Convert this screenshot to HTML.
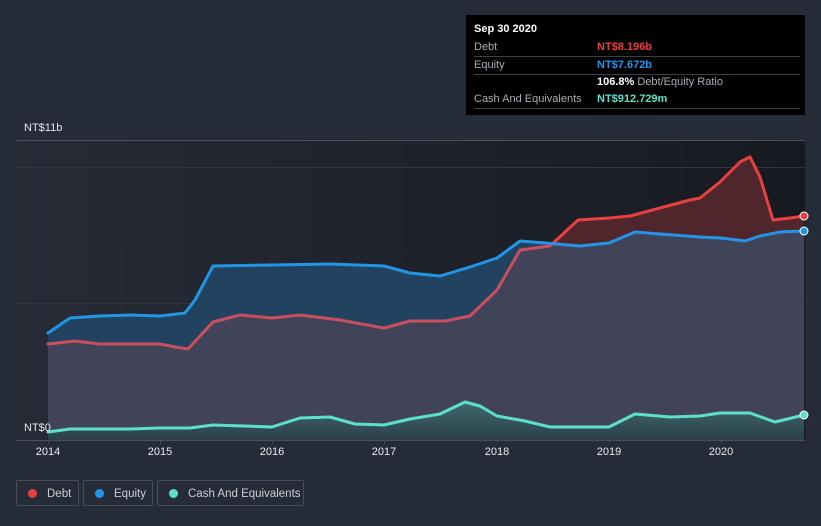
<!DOCTYPE html>
<html><head><meta charset="utf-8"><style>
html,body{margin:0;width:821px;height:526px;overflow:hidden}
body{background:#262c37;font-family:"Liberation Sans",sans-serif;position:relative}
.tip{position:absolute;left:466px;top:15px;width:339px;height:100px;background:#000;color:#fff;font-size:11px}
.row{position:absolute;left:8px;width:326px;border-bottom:1px solid #3c3f45;height:17px;line-height:17px}
.lbl{color:#a8acb3}
.v{position:absolute;left:123px;font-weight:bold}
.leg{position:absolute;top:480px;height:26px;border:1px solid #474d58;border-radius:2px;color:#c9ccd2;font-size:11.5px;line-height:26px;box-sizing:border-box;white-space:nowrap;overflow:hidden}
.dot{display:inline-block;width:9px;height:9px;border-radius:50%;margin:0 10px 0 11px;vertical-align:-1px}
.yr{position:absolute;top:446px;color:#e6e8eb;font-size:11px;width:40px;text-align:center}
</style></head><body>
<svg width="821" height="526" style="position:absolute;left:0;top:0">
<defs>
<linearGradient id="bg" x1="0" x2="1"><stop offset="0" stop-color="#262b36"/><stop offset="1" stop-color="#171a21"/></linearGradient>
<linearGradient id="cg" x1="0" y1="0" x2="0" y2="1"><stop offset="0" stop-color="#3f6b6e"/><stop offset="1" stop-color="#2c3f48"/></linearGradient>
<clipPath id="eq"><path d="M48,333 L70,318 100,316 130,315 160,316 185,313 195,300 213,266 272,265 330,264 384,266 410,273 440,276 470,267 497,258 520,241 545,243 580,246 609,243 635,232 660,234 700,237 721,238 745,241 760,236 780,232 804,231 L804,440 48,440Z"/></clipPath>
</defs>
<rect x="16" y="140" width="789" height="300" fill="url(#bg)"/>
<line x1="16" y1="140.5" x2="805" y2="140.5" stroke="#4a4f5a"/>
<line x1="16" y1="167.5" x2="805" y2="167.5" stroke="#30353f"/>
<line x1="16" y1="303.5" x2="805" y2="303.5" stroke="#30353f"/>
<path d="M48,333 L70,318 100,316 130,315 160,316 185,313 195,300 213,266 272,265 330,264 384,266 410,273 440,276 470,267 497,258 520,241 545,243 580,246 609,243 635,232 660,234 700,237 721,238 745,241 760,236 780,232 804,231 L804,440 48,440Z" fill="#21435f"/>
<path d="M48,344 L75,341 100,344 130,344 160,344 175,347 188,349 213,322 240,315 272,318 300,315 340,320 384,328 410,321 445,321 470,316 497,290 520,250 550,246 578,220 609,218 630,216 660,208 690,200 700,198 720,182 740,162 750,157 760,177 773,220 790,218 804,216 L804,440 48,440Z" fill="#4f262c"/>
<path d="M48,344 L75,341 100,344 130,344 160,344 175,347 188,349 213,322 240,315 272,318 300,315 340,320 384,328 410,321 445,321 470,316 497,290 520,250 550,246 578,220 609,218 630,216 660,208 690,200 700,198 720,182 740,162 750,157 760,177 773,220 790,218 804,216 L804,440 48,440Z" fill="#414459" clip-path="url(#eq)"/>
<path d="M48,432 L70,429 100,429 130,429 160,428 190,428 213,425 272,427 300,418 330,417 355,424 384,425 410,419 440,414 465,402 480,406 497,416 525,421 550,427 580,427 609,427 635,414 670,417 700,416 720,413 750,413 775,422 804,415 L804,440 48,440Z" fill="url(#cg)"/>
<g fill="none" stroke-width="3" stroke-linejoin="round" stroke-linecap="round">
<polyline stroke="#c94f5f" points="48,344 75,341 100,344 130,344 160,344 175,347 188,349 213,322 240,315 272,318 300,315 340,320 384,328 410,321 445,321 470,316 497,290 520,250 550,246"/>
<polyline stroke="#e8403f" points="550,246 578,220 609,218 630,216 660,208 690,200 700,198 720,182 740,162 750,157 760,177 773,220 790,218 804,216"/>
<polyline stroke="#2394e6" points="48,333 70,318 100,316 130,315 160,316 185,313 195,300 213,266 272,265 330,264 384,266 410,273 440,276 470,267 497,258 520,241 545,243 580,246 609,243 635,232 660,234 700,237 721,238 745,241 760,236 780,232 804,231"/>
<polyline stroke="#5de0ca" points="48,432 70,429 100,429 130,429 160,428 190,428 213,425 272,427 300,418 330,417 355,424 384,425 410,419 440,414 465,402 480,406 497,416 525,421 550,427 580,427 609,427 635,414 670,417 700,416 720,413 750,413 775,422 804,415"/>
</g>
<circle cx="804" cy="216" r="4" fill="#e8403f" stroke="#fff" stroke-width="1"/>
<circle cx="804" cy="231" r="4" fill="#2394e6" stroke="#fff" stroke-width="1"/>
<circle cx="804" cy="415" r="4" fill="#5de0ca" stroke="#fff" stroke-width="1"/>
<line x1="16" y1="440.5" x2="805" y2="440.5" stroke="#4a4f5a"/>
<g stroke="#4a4f5a"><line x1="48.5" y1="440" x2="48.5" y2="444"/><line x1="160.5" y1="440" x2="160.5" y2="444"/><line x1="272.5" y1="440" x2="272.5" y2="444"/><line x1="384.5" y1="440" x2="384.5" y2="444"/><line x1="497.5" y1="440" x2="497.5" y2="444"/><line x1="609.5" y1="440" x2="609.5" y2="444"/><line x1="721.5" y1="440" x2="721.5" y2="444"/></g>
</svg>
<div style="position:absolute;left:24px;top:122px;color:#e6e8eb;font-size:11px">NT$11b</div>
<div style="position:absolute;left:24px;top:422px;color:#e6e8eb;font-size:11px">NT$0</div>
<div class="yr" style="left:28px">2014</div><div class="yr" style="left:140px">2015</div><div class="yr" style="left:252px">2016</div><div class="yr" style="left:364px">2017</div><div class="yr" style="left:477px">2018</div><div class="yr" style="left:589px">2019</div><div class="yr" style="left:701px">2020</div>
<div class="tip">
<div style="position:absolute;left:8px;top:8px;font-weight:bold">Sep 30 2020</div>
<div class="row" style="top:24px"><span class="lbl">Debt</span><span class="v" style="color:#e8403f">NT$8.196b</span></div>
<div class="row" style="top:42px"><span class="lbl">Equity</span><span class="v" style="color:#2394e6">NT$7.672b</span></div>
<div class="row" style="top:59px;border:none"><span class="v">106.8% <span style="color:#a8acb3;font-weight:normal">Debt/Equity Ratio</span></span></div>
<div class="row" style="top:76px"><span class="lbl">Cash And Equivalents</span><span class="v" style="color:#5de0ca">NT$912.729m</span></div>
</div>
<div class="leg" style="left:16px;width:63px"><span class="dot" style="background:#e8403f"></span>Debt</div>
<div class="leg" style="left:83px;width:70px"><span class="dot" style="background:#2394e6"></span>Equity</div>
<div class="leg" style="left:157px;width:147px"><span class="dot" style="background:#5de0ca"></span>Cash And Equivalents</div>
</body></html>
